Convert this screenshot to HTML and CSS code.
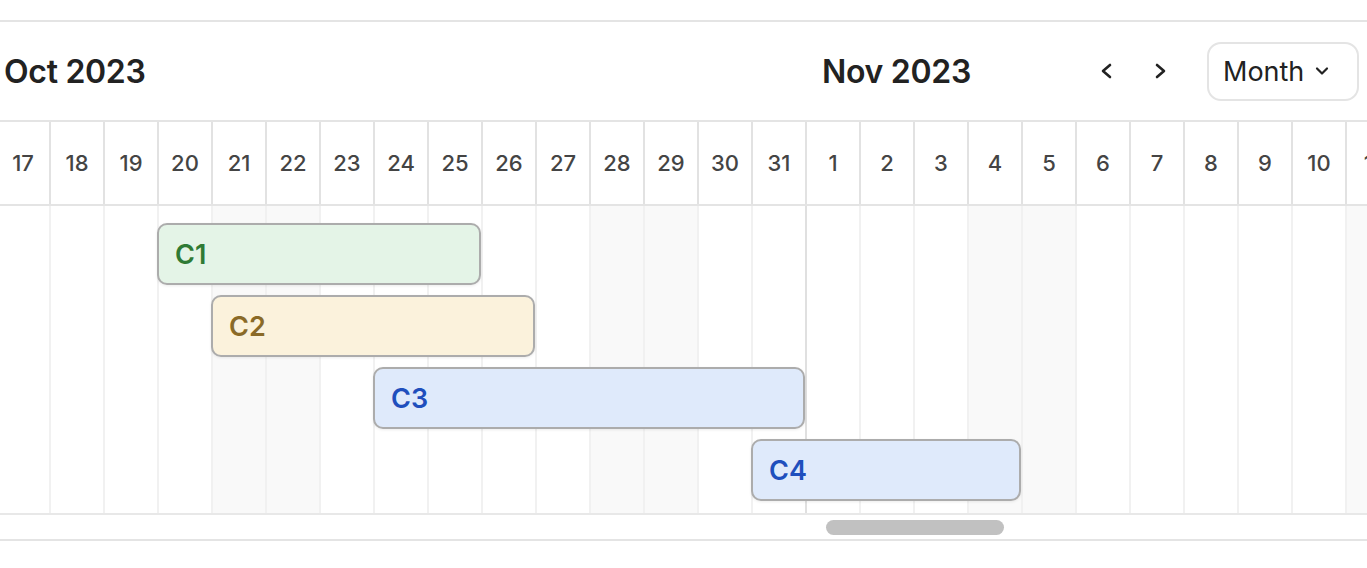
FILE: index.html
```html
<!DOCTYPE html>
<html lang="en">
<head>
<meta charset="utf-8">
<title>Timeline</title>
<link rel="stylesheet" href="styles.css">
</head>
<body>
<div class="card">
  <div class="header">
    <div class="labels">
      <div class="month-label oct">Oct 2023</div>
      <div class="month-label nov">Nov 2023</div>
    </div>
    <button class="nav-btn" aria-label="Previous">
      <svg width="14" height="16" viewBox="0 0 14 16"><polyline points="11,2 4,8 11,14" fill="none" stroke="#222" stroke-width="2.6" stroke-linecap="round" stroke-linejoin="round"/></svg>
    </button>
    <button class="nav-btn" aria-label="Next">
      <svg width="14" height="16" viewBox="0 0 14 16"><polyline points="3,2 10,8 3,14" fill="none" stroke="#222" stroke-width="2.6" stroke-linecap="round" stroke-linejoin="round"/></svg>
    </button>
    <button class="select">
      <span>Month</span>
      <svg width="16" height="10" viewBox="0 0 16 10"><polyline points="3,2.5 8,7.5 13,2.5" fill="none" stroke="#222" stroke-width="2.2" stroke-linecap="round" stroke-linejoin="round"/></svg>
    </button>
  </div>

  <div class="days">
    <div class="day">17</div><div class="day">18</div><div class="day">19</div><div class="day">20</div>
    <div class="day">21</div><div class="day">22</div><div class="day">23</div><div class="day">24</div>
    <div class="day">25</div><div class="day">26</div><div class="day">27</div><div class="day">28</div>
    <div class="day">29</div><div class="day">30</div><div class="day">31</div><div class="day">1</div>
    <div class="day">2</div><div class="day">3</div><div class="day">4</div><div class="day">5</div>
    <div class="day">6</div><div class="day">7</div><div class="day">8</div><div class="day">9</div>
    <div class="day">10</div><div class="day">11</div>
  </div>

  <div class="body">
    <div class="col c1"></div><div class="col c2"></div><div class="col c3"></div><div class="col c4"></div>
    <div class="col c5 weekend"></div><div class="col c6 weekend"></div><div class="col c7"></div><div class="col c8"></div>
    <div class="col c9"></div><div class="col c10"></div><div class="col c11"></div><div class="col c12 weekend"></div>
    <div class="col c13 weekend"></div><div class="col c14"></div><div class="col c15 month-end"></div><div class="col c16"></div>
    <div class="col c17"></div><div class="col c18"></div><div class="col c19 weekend"></div><div class="col c20 weekend"></div>
    <div class="col c21"></div><div class="col c22"></div><div class="col c23"></div><div class="col c24"></div>
    <div class="col c25"></div><div class="col c26 weekend"></div>

    <div class="bar green row1 b-c1">C1</div>
    <div class="bar yellow row2 b-c2">C2</div>
    <div class="bar blue row3 b-c3">C3</div>
    <div class="bar blue row4 b-c4">C4</div>
  </div>

  <div class="scroll">
    <div class="thumb"></div>
  </div>
</div>
</body>
</html>
```

FILE: styles.css
```css
* { box-sizing: border-box; }

html, body {
  margin: 0;
  padding: 0;
  background: #ffffff;
  font-family: Inter, "Noto Sans", "Liberation Sans", sans-serif;
  color: #222;
  overflow: hidden;
}

.card {
  margin-top: 20px;
  border-top: 2px solid #e4e4e4;
  border-bottom: 2px solid #e4e4e4;
  overflow: hidden;
  width: 1367px;
}

.header {
  height: 98px;
  display: flex;
  align-items: center;
}

.labels {
  display: flex;
  width: 1086px;
}

.month-label {
  font-size: 32px;
  font-weight: 600;
  color: #222;
  letter-spacing: -0.3px;
}

.oct {
  width: 806px;
  padding-left: 4px;
}

.nov {
  padding-left: 16px;
}

.nav-btn {
  width: 40px;
  height: 40px;
  border: 0;
  background: transparent;
  padding: 0;
  display: flex;
  align-items: center;
  justify-content: center;
  margin-right: 15px;
}

.select {
  margin-left: 11px;
  width: 152px;
  height: 59px;
  border: 2px solid #e4e4e4;
  border-radius: 14px;
  background: #fff;
  display: flex;
  align-items: center;
  padding: 0 0 0 14px;
  gap: 10px;
  font-family: Inter, "Noto Sans", "Liberation Sans", sans-serif;
  font-size: 27px;
  font-weight: 400;
  color: #222;
}

.select span { line-height: 1; }

.days {
  display: grid;
  grid-template-columns: repeat(26, 54px);
  margin-left: -3px;
  border-top: 2px solid #e4e4e4;
  border-bottom: 2px solid #e4e4e4;
  height: 86px;
  width: 1407px;
}

.day {
  border-right: 2px solid #e2e2e2;
  display: flex;
  align-items: center;
  justify-content: center;
  font-size: 22px;
  font-weight: 500;
  color: #444;
}

.body {
  display: grid;
  grid-template-columns: repeat(26, 54px);
  grid-template-rows: 17px 62px 10px 62px 10px 62px 10px 62px 12px;
  margin-left: -3px;
  width: 1407px;
  border-bottom: 2px solid #e8e8e8;
}

.col {
  grid-row: 1 / -1;
  border-right: 2px solid #f1f1f1;
}
.c1 { grid-column: 1; } .c2 { grid-column: 2; } .c3 { grid-column: 3; } .c4 { grid-column: 4; }
.c5 { grid-column: 5; } .c6 { grid-column: 6; } .c7 { grid-column: 7; } .c8 { grid-column: 8; }
.c9 { grid-column: 9; } .c10 { grid-column: 10; } .c11 { grid-column: 11; } .c12 { grid-column: 12; }
.c13 { grid-column: 13; } .c14 { grid-column: 14; } .c15 { grid-column: 15; } .c16 { grid-column: 16; }
.c17 { grid-column: 17; } .c18 { grid-column: 18; } .c19 { grid-column: 19; } .c20 { grid-column: 20; }
.c21 { grid-column: 21; } .c22 { grid-column: 22; } .c23 { grid-column: 23; } .c24 { grid-column: 24; }
.c25 { grid-column: 25; } .c26 { grid-column: 26; }

.weekend { background: #f9f9f9; }
.month-end { border-right-color: #e0e0e0; }

.bar {
  margin: 0 2px 0 -2px;
  border: 2px solid #acacac;
  border-radius: 10px;
  display: flex;
  align-items: center;
  padding-left: 16px;
  font-size: 27px;
  font-weight: 600;
  box-shadow: 0 1px 3px rgba(0, 0, 0, 0.08);
  position: relative;
}

.row1 { grid-row: 2; }
.row2 { grid-row: 4; }
.row3 { grid-row: 6; }
.row4 { grid-row: 8; }

.b-c1 { grid-column: 4 / span 6; }
.b-c2 { grid-column: 5 / span 6; }
.b-c3 { grid-column: 8 / span 8; }
.b-c4 { grid-column: 15 / span 5; }

.green { background: #e4f4e7; color: #2f7a35; }
.yellow { background: #fbf2dc; color: #8a6a27; }
.blue { background: #dfeafb; color: #1f4fbd; }

.scroll {
  height: 24px;
  padding-top: 5px;
}

.thumb {
  margin-left: 826px;
  width: 178px;
  height: 15px;
  border-radius: 8px;
  background: #c1c1c1;
}
```
